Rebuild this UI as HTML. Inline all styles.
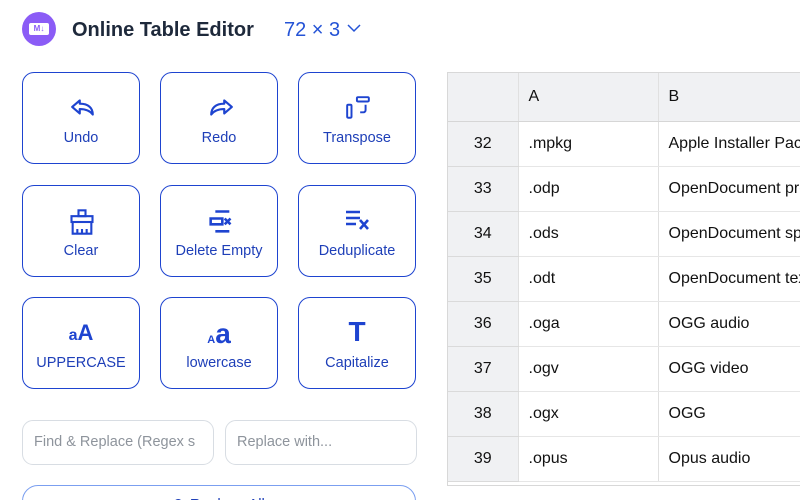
<!DOCTYPE html>
<html><head><meta charset="utf-8"><style>
*{box-sizing:border-box;margin:0;padding:0}
html,body{width:800px;height:500px;overflow:hidden}
body{background:#fff;font-family:"Liberation Sans",sans-serif;position:relative}
.logo{position:absolute;left:22px;top:12px;width:34px;height:34px;border-radius:50%;background:#8b5cf6;}
.logo span{position:absolute;left:7px;top:11px;width:20px;height:12px;background:#fff;border-radius:2px;font-size:8px;font-weight:bold;color:#8b5cf6;text-align:center;line-height:12px}
.title{position:absolute;left:72px;top:19px;font-size:20px;font-weight:bold;color:#1e293b}
.dim{position:absolute;left:284px;top:19px;font-size:20px;color:#2453d6}
.btn{position:absolute;width:118px;height:92px;border:1.3px solid #1e44d0;border-radius:12px;color:#1e3fb8;font-size:14.5px;text-align:center}
.btn svg{position:absolute;left:45px;top:22px}
.btn .l{position:absolute;left:0;right:0;top:57px}
.in{position:absolute;top:420px;height:45px;border:1px solid #d8dde3;border-radius:11px;color:#8e949c;font-size:14.5px;padding:13px 11px;white-space:nowrap;overflow:hidden}
.big{position:absolute;left:22px;top:485px;width:394px;height:40px;border:1.3px solid #7b9ff0;border-radius:16px;text-align:center;color:#1e3fb8;font-size:15px;padding-top:9px}
.tbl{position:absolute;left:447px;top:72px;width:360px;height:414px;border:1px solid #d8d8d8;border-right:none;overflow:hidden}
table{border-collapse:collapse;font-size:16px;color:#111;table-layout:fixed;width:420px}
td{height:45px;border-bottom:1px solid #e6e6e6;border-right:1px solid #e0e0e0;padding-left:10px;white-space:nowrap;overflow:hidden}
td.n{background:#f0f1f3;text-align:center;padding:0;border-bottom-color:#dadada}
tr.h td{background:#f0f1f3;height:48px;border-bottom:1px solid #d6d6d6}
</style></head><body>
<div class="logo"><span>M↓</span></div>
<div class="title">Online Table Editor</div>
<div class="dim">72 × 3 <svg width="16" height="10" viewBox="0 0 16 10" style="vertical-align:3px"><path d="M2 2l6 6 6-6" fill="none" stroke="#2453d6" stroke-width="1.5"/></svg></div>

<div class="btn" style="left:22px;top:72px"><svg width="30" height="26" viewBox="0 0 24 24" fill="none" stroke="#1e44d0" stroke-width="2" stroke-linejoin="round"><path d="M9 5L2 11l7 6v-4c5 0 9 1 12 5 0-6-4-10-12-10z"/></svg><div class="l">Undo</div></div>
<div class="btn" style="left:160px;top:72px"><svg width="30" height="26" viewBox="0 0 24 24" fill="none" stroke="#1e44d0" stroke-width="2" stroke-linejoin="round"><path d="M15 5l7 6-7 6v-4c-5 0-9 1-12 5 0-6 4-10 12-10z"/></svg><div class="l">Redo</div></div>
<div class="btn" style="left:298px;top:72px"><svg width="28" height="26" viewBox="0 0 24 24" fill="none" stroke="#1e44d0" stroke-width="1.8"><rect x="11" y="2" width="11" height="4" rx="1"/><rect x="2" y="9" width="4" height="12" rx="1"/><path d="M19 9v5a2 2 0 0 1-2 2h-3"/></svg><div class="l">Transpose</div></div>

<div class="btn" style="left:22px;top:185px"><svg width="28" height="28" viewBox="0 0 24 24" fill="none" stroke="#1e44d0" stroke-width="1.8"><rect x="9" y="2" width="6" height="5"/><rect x="3" y="7" width="18" height="5"/><path d="M4 12v10h16V12M8 22v-4M12 22v-4M16 22v-4"/></svg><div class="l">Clear</div></div>
<div class="btn" style="left:160px;top:185px"><svg width="28" height="28" viewBox="0 0 24 24" fill="none" stroke="#1e44d0" stroke-width="2.2"><path d="M8 3h12M4 9h10v5H4zM8 20h12M16 9l5 5M21 9l-5 5"/></svg><div class="l">Delete Empty</div></div>
<div class="btn" style="left:298px;top:185px"><svg width="28" height="24" viewBox="0 0 28 24" fill="none" stroke="#1e44d0" stroke-width="2.6"><path d="M2 4h14M2 10h14M2 16h10M16 12l8 9M24 12l-8 9"/></svg><div class="l">Deduplicate</div></div>

<div class="btn" style="left:22px;top:297px"><div style="position:absolute;left:0;right:0;top:22px;font-size:22px;font-weight:bold;color:#1e44d0"><span style="font-size:16px">a</span>A</div><div class="l">UPPERCASE</div></div>
<div class="btn" style="left:160px;top:297px"><div style="position:absolute;left:0;right:0;top:20px;font-size:28px;font-weight:bold;color:#1e44d0"><span style="font-size:11px">A</span>a</div><div class="l">lowercase</div></div>
<div class="btn" style="left:298px;top:297px"><div style="position:absolute;left:0;right:0;top:18px;font-size:28px;font-weight:bold;color:#1e44d0">T</div><div class="l">Capitalize</div></div>

<div class="in" style="left:22px;width:192px">Find &amp; Replace (Regex s</div>
<div class="in" style="left:225px;width:192px">Replace with...</div>
<div class="big">⟳ Replace All</div>

<div class="tbl"><table>
<colgroup><col style="width:70px"><col style="width:140px"><col style="width:210px"></colgroup>
<tr class="h"><td class="n"></td><td>A</td><td>B</td></tr>
<tr><td class="n">32</td><td>.mpkg</td><td>Apple Installer Package</td></tr>
<tr><td class="n">33</td><td>.odp</td><td>OpenDocument presentation</td></tr>
<tr><td class="n">34</td><td>.ods</td><td>OpenDocument spreadsheet</td></tr>
<tr><td class="n">35</td><td>.odt</td><td>OpenDocument text</td></tr>
<tr><td class="n">36</td><td>.oga</td><td>OGG audio</td></tr>
<tr><td class="n">37</td><td>.ogv</td><td>OGG video</td></tr>
<tr><td class="n">38</td><td>.ogx</td><td>OGG</td></tr>
<tr><td class="n">39</td><td>.opus</td><td>Opus audio</td></tr>
</table></div>
</body></html>
